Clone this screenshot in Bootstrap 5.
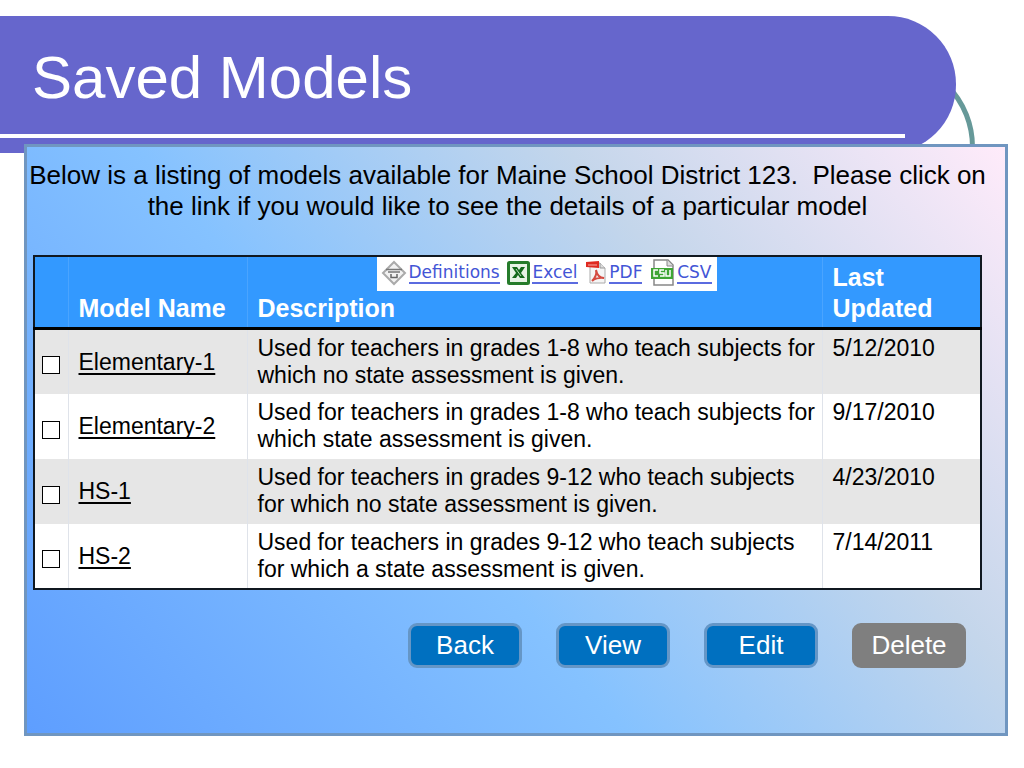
<!DOCTYPE html>
<html lang="en">
<head>
<meta charset="utf-8">
<meta name="viewport" content="width=device-width, initial-scale=1">
<title>Saved Models</title>
<link href="https://cdn.jsdelivr.net/npm/bootstrap@5.3.0/dist/css/bootstrap.min.css" rel="stylesheet">
<style>
  body { font-family: "Liberation Sans", Arial, sans-serif; color: #000; background: #fff; }
  .banner { margin-right: 68px; height: 137px; }
  .banner-shape { background: #6666cc; border-radius: 0 68px 68px 0; z-index: 1; }
  .banner-shape h1 { font-size: 60px; line-height: 72px; padding: 26px 0 0 32px; }
  .banner-rule { height: 4px; margin: 20px 51px 0 0; background: #fff; }
  /* ring that shows from behind the banner's rounded end */
  .banner-ring { width: 180px; height: 180px; right: -19px; top: 41px; border: 5px solid #669999; }
  .panel { margin: -9px 16px 32px 24px; z-index: 2; min-height: 592px; border: 3px solid #7096c0;
    background: linear-gradient(50deg, #5e9eff 0%, #85c2ff 41%, #c4d6eb 70%, #ffebfa 100%); }
  .intro { font-size: 26px; line-height: 31px; padding: 13px 17px 0 0; margin-bottom: 33px; }
  .models-wrap { margin: 0 23px 0 6px; }
  .models { table-layout: fixed; width: 100%; border-collapse: collapse; border: 2px solid #101820; font-size: 23px; line-height: 27px; background: #fff; }
  .models th, .models td { padding: 5px 0 5px 10px; border-left: 1px solid #dfe3ea; }
  .models thead { background: #3399ff; color: #fff; font-size: 25px; line-height: 31px; border-bottom: 3px solid #000; }
  .models thead th { padding-top: 0; padding-bottom: 3px; vertical-align: bottom; border-left-color: #4aa4ff; }
  .models thead th:last-child { padding-right: 40px; }
  .models tbody th { font-weight: 400; vertical-align: middle; }
  .models tbody td { vertical-align: top; }
  .models tbody tr { height: 65px; }
  .models tbody tr:nth-child(odd) { background: #e6e6e6; }
  .models th:first-child, .models td:first-child { padding-left: 7px; border-left: 0; }
  .models tbody td:first-child { vertical-align: middle; }
  .models tbody a { color: #000; text-decoration-thickness: 2px; text-underline-offset: 3px; text-decoration-skip-ink: none; }
  .models .pick { width: 18px; height: 18px; margin: 6px 0 0; border: 1px solid #000; border-radius: 0; background-color: #fff; }
  .models .pick:checked { background-color: #0070c0; }
  .col-pick { width: 34px; } .col-name { width: 179px; } .col-date { width: 159px; }
  .exports { width: 340px; height: 34px; margin: 0 0 2px 119px; padding: 0 5px 3px 4px; background: #fff; font: 17px/24px "DejaVu Sans", Verdana, sans-serif; }
  .exports a { color: #4355d6; gap: 2px; text-decoration: none; }
  .exports span { line-height: 20px; border-bottom: 2px solid #5b6be0; }
  .actions { margin: 33px 39px 0 0; gap: 34px; }
  .actions .btn { width: 114px; height: 45px; padding: 0; font-size: 26px; line-height: 39px; color: #fff; background: #0070c0; border: 3px solid #6596c6; border-radius: 9px; }
  .actions .btn-delete { background: #7f7f7f; border-color: #7f7f7f; }
</style>
</head>
<body>
<header class="banner position-relative mt-3">
  <div class="banner-ring position-absolute rounded-circle"></div>
  <div class="banner-shape position-relative h-100">
    <h1 class="m-0 fw-normal text-white">Saved Models</h1>
    <div class="banner-rule"></div>
  </div>
</header>
<main class="panel position-relative">
  <p class="intro text-center">Below is a listing of models available for Maine School District 123.&nbsp; Please click on the link if you would like to see the details of a particular model</p>
  <div class="models-wrap">
    <table class="models">
      <colgroup><col class="col-pick"><col class="col-name"><col><col class="col-date"></colgroup>
      <thead>
        <tr>
          <th scope="col"></th>
          <th scope="col">Model Name</th>
          <th scope="col">
            <div class="exports d-flex align-items-center justify-content-between">
              <a href="#definitions" class="d-flex align-items-center">
                <svg width="26" height="26" viewBox="0 0 26 26" fill="none"><path d="M13 2 24 13 13 24 2 13Z" fill="#f2f2f2" stroke="#aaa" stroke-width="2"/><path d="M5 9.500H21M7 12H19" stroke="#777" stroke-width="1.500"/><path d="M10 14V17.500H16V14" stroke="#666" stroke-width="1.500"/></svg>
                <span>Definitions</span></a>
              <a href="#excel" class="d-flex align-items-center">
                <svg width="23" height="24" viewBox="0 0 23 24"><rect x="1.500" y="1.500" width="20" height="21" rx="1" fill="#e8f3e6" stroke="#267c2b" stroke-width="3"/><path d="M5 6H10L12 9 14 6H18L14 12 18 17H13L11 14 9 17H5L9 12Z" fill="#14691c"/><path d="M9 8 14 15" stroke="#b9dcb7"/></svg>
                <span>Excel</span></a>
              <a href="#pdf" class="d-flex align-items-center">
                <svg width="22" height="25" viewBox="0 0 22 25"><path d="M5 3H15L20 8V23H5Z" fill="#f5f5f5" stroke="#aaa"/><path d="M15 3V8H20" fill="#ddd" stroke="#999"/><path d="M1 2 14 1V8L1 7Z" fill="#df2a21"/><path d="M3 5H12" stroke="#f7aaa5"/><path d="M7 21C10 18 12 14 11 10C12 15 15 18 19 18C14 17 9 19 7 21Z" fill="none" stroke="#d44a40" stroke-width="2"/></svg>
                <span>PDF</span></a>
              <a href="#csv" class="d-flex align-items-center">
                <svg width="25" height="27" viewBox="0 0 25 27"><path d="M4 1H18L23 6V26H4Z" fill="#fff" stroke="#888" stroke-width="1.500"/><path d="M17 1V7H23" fill="#ddd" stroke="#888"/><rect x="1" y="9" width="22" height="11" fill="#3fa535"/><path d="M8 11H4V17H8M14 11H10V14H14V17H10M16 11V17H20V11" fill="none" stroke="#fff" stroke-width="1.500"/></svg>
                <span>CSV</span></a>
            </div>
            Description
          </th>
          <th scope="col">Last Updated</th>
        </tr>
      </thead>
      <tbody>
        <tr>
          <td><input class="form-check-input pick d-block" type="checkbox" aria-labelledby="m1"></td>
          <th scope="row"><a id="m1" href="#elementary-1">Elementary-1</a></th>
          <td>Used for teachers in grades 1-8 who teach subjects for which no state assessment is given.</td>
          <td>5/12/2010</td>
        </tr>
        <tr>
          <td><input class="form-check-input pick d-block" type="checkbox" aria-labelledby="m2"></td>
          <th scope="row"><a id="m2" href="#elementary-2">Elementary-2</a></th>
          <td>Used for teachers in grades 1-8 who teach subjects for which state assessment is given.</td>
          <td>9/17/2010</td>
        </tr>
        <tr>
          <td><input class="form-check-input pick d-block" type="checkbox" aria-labelledby="m3"></td>
          <th scope="row"><a id="m3" href="#hs-1">HS-1</a></th>
          <td>Used for teachers in grades 9-12 who teach subjects for which no state assessment is given.</td>
          <td>4/23/2010</td>
        </tr>
        <tr>
          <td><input class="form-check-input pick d-block" type="checkbox" aria-labelledby="m4"></td>
          <th scope="row"><a id="m4" href="#hs-2">HS-2</a></th>
          <td>Used for teachers in grades 9-12 who teach subjects for which a state assessment is given.</td>
          <td>7/14/2011</td>
        </tr>
      </tbody>
    </table>
  </div>
  <div class="actions d-flex flex-wrap justify-content-end">
    <button type="button" class="btn">Back</button>
    <button type="button" class="btn">View</button>
    <button type="button" class="btn">Edit</button>
    <button type="button" class="btn btn-delete">Delete</button>
  </div>
</main>
<script src="https://cdn.jsdelivr.net/npm/bootstrap@5.3.0/dist/js/bootstrap.bundle.min.js"></script>
</body>
</html>
